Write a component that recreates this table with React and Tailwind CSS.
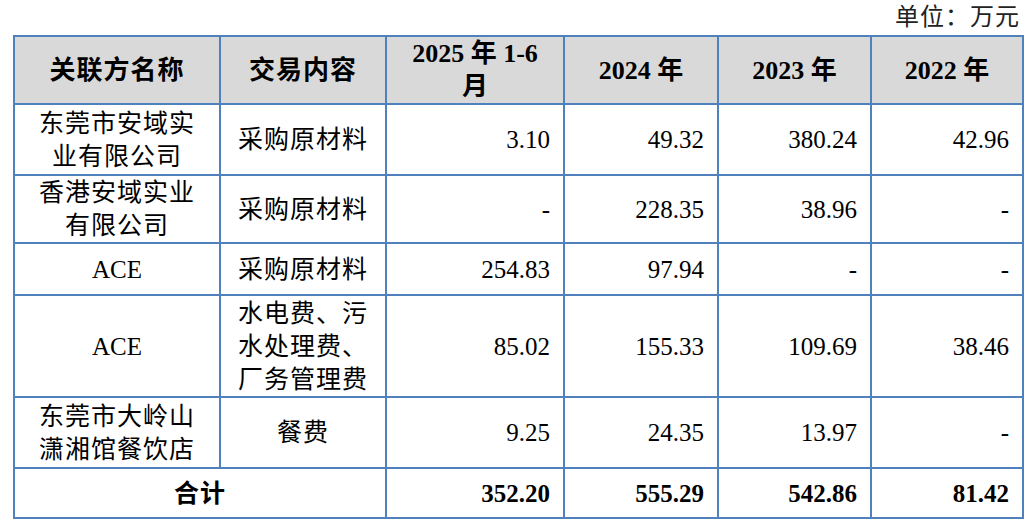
import React from "react";

const B = "border-2 border-[#4f81bd]";
const numCls = `${B} text-right pr-[13px] align-middle`;
const cjk = "tracking-[1px]";

const rows = [
  { name: ["东莞市安域实", "业有限公司"], content: ["采购原材料"], v: ["3.10", "49.32", "380.24", "42.96"], h: "h-[71px]" },
  { name: ["香港安域实业", "有限公司"], content: ["采购原材料"], v: ["-", "228.35", "38.96", "-"], h: "h-[68px]" },
  { name: ["ACE"], content: ["采购原材料"], v: ["254.83", "97.94", "-", "-"], h: "h-[52px]" },
  { name: ["ACE"], content: ["水电费、污", "水处理费、", "厂务管理费"], v: ["85.02", "155.33", "109.69", "38.46"], h: "h-[102px]" },
  { name: ["东莞市大岭山", "潇湘馆餐饮店"], content: ["餐费"], v: ["9.25", "24.35", "13.97", "-"], h: "h-[71px]" },
];

function Lines({ lines }) {
  return lines.map((l, i) => (
    <React.Fragment key={i}>
      {i > 0 && <br />}
      <span className={/^[A-Za-z]/.test(l) ? "" : cjk}>{l}</span>
    </React.Fragment>
  ));
}

export default function App() {
  return (
    <div
      className="w-[1028px] h-[528px] bg-white text-black text-[25px] leading-[33px]"
      style={{ fontFamily: '"Liberation Serif", "Noto Sans CJK SC", serif' }}
    >
      <div className="pl-[13px] w-[1024px]">
        <div className="h-[35px] flex items-center justify-end pr-[4px] text-[24px] tracking-[1px] text-[#222]">
          单位：万元
        </div>
        <table className="border-collapse table-fixed w-[1009px]">
          <colgroup>
            <col className="w-[206px]" />
            <col className="w-[166px]" />
            <col className="w-[178px]" />
            <col className="w-[154px]" />
            <col className="w-[153px]" />
            <col className="w-[152px]" />
          </colgroup>
          <thead>
            <tr className="h-[68px] bg-[#d9d9d9] font-bold text-[26px] leading-[33px]">
              <th className={`${B} text-center align-middle ${cjk}`}>关联方名称</th>
              <th className={`${B} text-center align-middle ${cjk}`}>交易内容</th>
              <th className={`${B} text-center align-middle px-[4px]`}>
                2025 年 1-6<br />月
              </th>
              <th className={`${B} text-center align-middle`}>2024 年</th>
              <th className={`${B} text-center align-middle`}>2023 年</th>
              <th className={`${B} text-center align-middle`}>2022 年</th>
            </tr>
          </thead>
          <tbody>
            {rows.map((r, i) => (
              <tr key={i} className={r.h}>
                <td className={`${B} text-center align-middle`}>
                  <Lines lines={r.name} />
                </td>
                <td className={`${B} text-center align-middle`}>
                  <Lines lines={r.content} />
                </td>
                {r.v.map((x, j) => (
                  <td key={j} className={numCls}>
                    {x}
                  </td>
                ))}
              </tr>
            ))}
            <tr className="h-[50px] font-bold">
              <td colSpan={2} className={`${B} text-center align-middle ${cjk}`}>
                合计
              </td>
              <td className={numCls}>352.20</td>
              <td className={numCls}>555.29</td>
              <td className={numCls}>542.86</td>
              <td className={numCls}>81.42</td>
            </tr>
          </tbody>
        </table>
      </div>
    </div>
  );
}
